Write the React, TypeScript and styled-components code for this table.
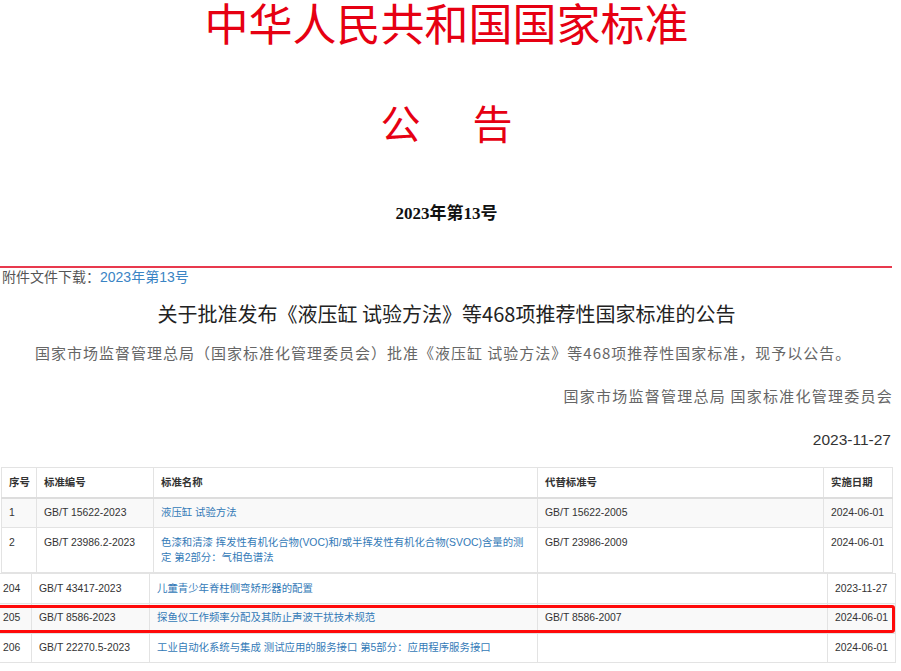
import React from "react";
import styled, { createGlobalStyle } from "styled-components";

const Global = createGlobalStyle`
  html, body { margin: 0; padding: 0; background: #fff; }
  body { font-family: "Liberation Sans", "Noto Sans CJK SC", sans-serif; color: #333; overflow: hidden; }
`;

const Page = styled.div`
  width: 893px;
  display: flex;
  flex-direction: column;
`;

const Title = styled.h1`
  margin: 0;
  height: 48px;
  line-height: 44px;
  font-size: 44px;
  font-weight: 400;
  text-align: center;
  color: #e60012;
  font-family: "Noto Sans CJK SC", serif;
`;

const Notice = styled.div`
  margin-top: 50px;
  height: 48px;
  display: flex;
  justify-content: center;
  gap: 52px;
  font-size: 40px;
  line-height: 48px;
  color: #e60012;
  font-family: "Noto Sans CJK SC", serif;
`;

const Issue = styled.div`
  margin-top: 56px;
  line-height: 24px;
  text-align: center;
  font-size: 17px;
  font-weight: 700;
  color: #111;
  font-family: "Liberation Serif", "Noto Sans CJK SC", serif;
`;

const Divider = styled.hr`
  margin: 40px 0 0;
  border: 0;
  height: 2px;
  width: 892px;
  background: #e8394d;
`;

const Attach = styled.div`
  line-height: 18px;
  font-size: 14px;
  color: #555;
  padding-left: 2px;
`;

const Link = styled.a`
  color: #3a84c4;
  text-decoration: none;
`;

const Headline = styled.h2`
  margin: 13px 0 0;
  line-height: 30px;
  font-size: 20px;
  font-weight: 400;
  text-align: center;
  color: #222;
  font-family: "Noto Sans CJK SC", sans-serif;
`;

const Para = styled.p<{ $align?: string; $gap: number }>`
  margin: ${(p) => p.$gap}px 0 0;
  line-height: 26px;
  font-size: 15px;
  letter-spacing: ${(p) => (p.$align === "right" ? "1.25px" : "1px")};
  color: #666;
  text-align: ${(p) => p.$align || "left"};
  text-indent: ${(p) => (p.$align === "right" ? "0" : "35px")};
  font-family: "Noto Sans CJK SC", sans-serif;
`;

const DateLine = styled.div`
  margin-top: 18px;
  line-height: 26px;
  font-size: 15.5px;
  text-align: right;
  color: #333;
  padding-right: 2px;
`;

const TableWrap = styled.div<{ $shift: number; $gap: number }>`
  position: relative;
  margin-left: ${(p) => p.$shift}px;
  margin-top: ${(p) => p.$gap}px;
`;

const Table = styled.table<{ $w: number }>`
  width: ${(p) => p.$w}px;
  border-collapse: collapse;
  table-layout: fixed;
  font-size: 10.4px;
  line-height: 15.6px;
  color: #333;
`;

const Th = styled.th`
  text-align: left;
  font-weight: 700;
  padding: 6.5px 7px;
  border: 1px solid #e3e3e3;
  border-bottom: 2px solid #ddd;
  vertical-align: top;
  white-space: nowrap;
  overflow: hidden;
`;

const Td = styled.td<{ $wrap?: boolean }>`
  padding: 6.5px 7px;
  border: 1px solid #e3e3e3;
  vertical-align: top;
  white-space: ${(p) => (p.$wrap ? "normal" : "nowrap")};
  overflow: hidden;
`;

const Tr = styled.tr<{ $striped?: boolean }>`
  background: ${(p) => (p.$striped ? "#f9f9f9" : "#fff")};
`;

const TableLink = styled.a`
  color: #337ab7;
  text-decoration: none;
`;

const Highlight = styled.div`
  position: absolute;
  left: 2px;
  top: 32px;
  width: 892px;
  height: 22px;
  border: 3px solid #ff0a0a;
  border-radius: 3px;
  pointer-events: none;
`;

type Row = { no: string; code: string; name: string; old: string; date: string; striped?: boolean };

const topRows: Row[] = [
  { no: "1", code: "GB/T 15622-2023", name: "液压缸 试验方法", old: "GB/T 15622-2005", date: "2024-06-01", striped: true },
  {
    no: "2",
    code: "GB/T 23986.2-2023",
    name: "色漆和清漆 挥发性有机化合物(VOC)和/或半挥发性有机化合物(SVOC)含量的测定 第2部分：气相色谱法",
    old: "GB/T 23986-2009",
    date: "2024-06-01",
  },
];

const bottomRows: Row[] = [
  { no: "204", code: "GB/T 43417-2023", name: "儿童青少年脊柱侧弯矫形器的配置", old: "", date: "2023-11-27" },
  { no: "205", code: "GB/T 8586-2023", name: "探鱼仪工作频率分配及其防止声波干扰技术规范", old: "GB/T 8586-2007", date: "2024-06-01", striped: true },
  { no: "206", code: "GB/T 22270.5-2023", name: "工业自动化系统与集成 测试应用的服务接口 第5部分：应用程序服务接口", old: "", date: "2024-06-01" },
];

const Body = ({ rows }: { rows: Row[] }) => (
  <tbody>
    {rows.map((r) => (
      <Tr key={r.no} $striped={r.striped}>
        <Td>{r.no}</Td>
        <Td>{r.code}</Td>
        <Td $wrap>
          <TableLink href="#">{r.name}</TableLink>
        </Td>
        <Td>{r.old}</Td>
        <Td>{r.date}</Td>
      </Tr>
    ))}
  </tbody>
);

export default function App() {
  return (
    <Page>
      <Global />
      <Title>中华人民共和国国家标准</Title>
      <Notice>
        <span>公</span>
        <span>告</span>
      </Notice>
      <Issue>2023年第13号</Issue>
      <Divider />
      <Attach>
        附件文件下载：<Link href="#">2023年第13号</Link>
      </Attach>
      <Headline>关于批准发布《液压缸 试验方法》等468项推荐性国家标准的公告</Headline>
      <Para $gap={11}>
        国家市场监督管理总局（国家标准化管理委员会）批准《液压缸 试验方法》等468项推荐性国家标准，现予以公告。
      </Para>
      <Para $gap={17} $align="right">
        国家市场监督管理总局 国家标准化管理委员会
      </Para>
      <DateLine>2023-11-27</DateLine>
      <TableWrap $shift={1} $gap={14}>
        <Table $w={891}>
          <colgroup>
            <col style={{ width: 35 }} />
            <col style={{ width: 117 }} />
            <col style={{ width: 384 }} />
            <col style={{ width: 286 }} />
            <col style={{ width: 69 }} />
          </colgroup>
          <thead>
            <tr>
              <Th>序号</Th>
              <Th>标准编号</Th>
              <Th>标准名称</Th>
              <Th>代替标准号</Th>
              <Th>实施日期</Th>
            </tr>
          </thead>
          <Body rows={topRows} />
        </Table>
      </TableWrap>
      <TableWrap $shift={-5} $gap={0}>
        <Table $w={900}>
          <colgroup>
            <col style={{ width: 36 }} />
            <col style={{ width: 118 }} />
            <col style={{ width: 388 }} />
            <col style={{ width: 290 }} />
            <col style={{ width: 68 }} />
          </colgroup>
          <Body rows={bottomRows} />
        </Table>
        <Highlight />
      </TableWrap>
    </Page>
  );
}
